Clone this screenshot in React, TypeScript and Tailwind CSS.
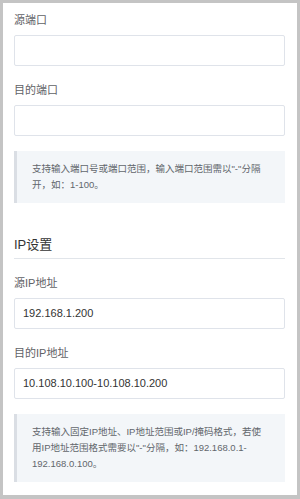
import React from "react";

const font = { fontFamily: '"Liberation Sans", "Noto Sans CJK SC", sans-serif' };

const Field = ({ label, value }: { label: string; value?: string }) => {
  return (
    <div className="flex flex-col">
      <div className="text-[11px] leading-[14px] text-[#5f6266] h-[14px]">{label}</div>
      <div className="mt-[8px] h-[31px] border border-[#dfe3ea] rounded-[2px] flex items-center px-[8px] text-[11px] text-[#333]">
        {value}
      </div>
    </div>
  );
};

const Note = ({ children }: { children: React.ReactNode }) => {
  return (
    <div className="bg-[#f3f6f9] border-l-[3px] border-[#dadee4] pl-[15px] pr-[12px] py-[10px] text-[9.5px] leading-[16px] text-[#62666c]">
      {children}
    </div>
  );
};

const App = () => {
  return (
    <div className="w-[300px] h-[499px] bg-[#c4c4c4] p-[3px] pb-[4px]" style={font}>
      <div className="h-full bg-white px-[11px] pr-[12px] pt-[10px]">
        <Field label="源端口" />
        <div className="mt-[17px]">
          <Field label="目的端口" />
        </div>
        <div className="mt-[15px]">
          <Note>
            支持输入端口号或端口范围，输入端口范围需以"-"分隔
            <br />
            开，如：1-100。
          </Note>
        </div>
        <div className="mt-[33px] text-[13px] leading-[18px] text-[#333]">IP设置</div>
        <div className="mt-[4px] border-t border-[#e1e5ea]"></div>
        <div className="mt-[17px]">
          <Field label="源IP地址" value="192.168.1.200" />
        </div>
        <div className="mt-[17px]">
          <Field label="目的IP地址" value="10.108.10.100-10.108.10.200" />
        </div>
        <div className="mt-[15px]">
          <Note>
            支持输入固定IP地址、IP地址范围或IP/掩码格式，若使
            <br />
            用IP地址范围格式需要以"-"分隔，如：192.168.0.1-
            <br />
            192.168.0.100。
          </Note>
        </div>
      </div>
    </div>
  );
};

export default App;
